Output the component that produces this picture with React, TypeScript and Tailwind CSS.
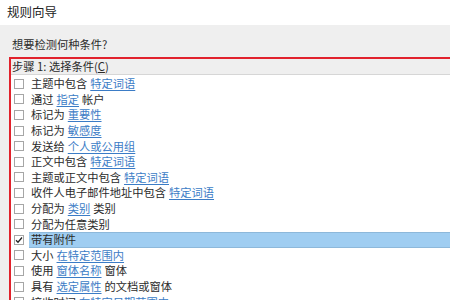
const rows: { pre: string; link?: string; post?: string; checked?: boolean }[] = [
  { pre: '主题中包含', link: '特定词语' },
  { pre: '通过', link: '指定', post: '帐户' },
  { pre: '标记为', link: '重要性' },
  { pre: '标记为', link: '敏感度' },
  { pre: '发送给', link: '个人或公用组' },
  { pre: '正文中包含', link: '特定词语' },
  { pre: '主题或正文中包含', link: '特定词语' },
  { pre: '收件人电子邮件地址中包含', link: '特定词语' },
  { pre: '分配为', link: '类别', post: '类别' },
  { pre: '分配为任意类别' },
  { pre: '带有附件', checked: true },
  { pre: '大小', link: '在特定范围内' },
  { pre: '使用', link: '窗体名称', post: '窗体' },
  { pre: '具有', link: '选定属性', post: '的文档或窗体' },
  { pre: '接收时间', link: '在特定日期范围内' },
];

function Row({ row }: { row: (typeof rows)[number] }) {
  return (
    <div className="flex items-center h-[15.6px]">
      <div className="w-[18px] flex items-center">
        <div className="ml-[3px] w-[10px] h-[10px] border border-[#a6a6a6] bg-white flex items-center justify-center">
          {row.checked && (
            <svg width="8" height="8" viewBox="0 0 8 8">
              <path d="M1 4.2 L3 6.2 L7 1.5" fill="none" stroke="#222" strokeWidth="1.3" />
            </svg>
          )}
        </div>
      </div>
      <div
        className={
          row.checked
            ? 'flex-1 h-full flex items-center pl-[2px] bg-[#9fcdf1] border-y border-[#8db8da]'
            : 'flex-1 h-full flex items-center pl-[2px]'
        }
      >
        <span className="text-[#2b2b2b]">{row.pre}</span>
        {row.link && (
          <span className="ml-[3px] text-[#3b7cc6] underline underline-offset-[2px] decoration-[#3b7cc6]">
            {row.link}
          </span>
        )}
        {row.post && <span className="ml-[3px] text-[#2b2b2b]">{row.post}</span>}
      </div>
    </div>
  );
}

export default function App() {
  return (
    <div
      className="w-[450px] h-[300px] overflow-hidden bg-white flex flex-col text-[11.25px] leading-[15px]"
      style={{ fontFamily: '"Noto Sans CJK SC", "Noto Sans", sans-serif' }}
    >
      <div className="h-[25px] shrink-0 pl-[7px] pt-[4px] text-[12.5px] text-[#222]">规则向导</div>
      <div className="flex-1 bg-[#efefef] pl-[9px]">
        <div className="h-[32px] pt-[12px] pl-[3px] text-[#2b2b2b]">想要检测何种条件?</div>
        <div className="w-[460px] border-2 border-[#e1222c] bg-white">
          <div className="h-[16px] bg-[#efefef] border-b border-[#d6d6d6] pl-[1px] flex items-center text-[#2b2b2b]">
            步骤 1: 选择条件(<span className="underline">C</span>)
          </div>
          <div className="pt-[1px]">
            {rows.map((r, i) => (
              <Row key={i} row={r} />
            ))}
          </div>
        </div>
      </div>
    </div>
  );
}
